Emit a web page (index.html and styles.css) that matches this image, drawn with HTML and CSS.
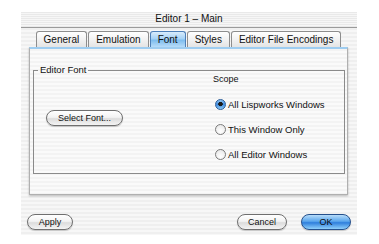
FILE: index.html
```html
<!DOCTYPE html>
<html lang="en">
<head>
    <meta charset="UTF-8">
    <title>Editor 1 – Main</title>
    <link rel="stylesheet" href="styles.css">
</head>
<body>
    <div class="window">
        <div class="titlebar">Editor 1 – Main</div>

        <div class="tabs">
            <div class="tab">General</div>
            <div class="tab">Emulation</div>
            <div class="tab active">Font</div>
            <div class="tab">Styles</div>
            <div class="tab">Editor File Encodings</div>
        </div>

        <div class="panel">
            <fieldset class="group">
                <legend>Editor Font</legend>
                <div class="group-left">
                    <button class="btn">Select Font...</button>
                </div>
                <div class="group-right">
                    <div class="scope-label">Scope</div>
                    <label class="radio checked"><span class="dot"></span>All Lispworks Windows</label>
                    <label class="radio"><span class="dot"></span>This Window Only</label>
                    <label class="radio"><span class="dot"></span>All Editor Windows</label>
                </div>
            </fieldset>
        </div>

        <div class="buttons">
            <button class="btn apply">Apply</button>
            <div class="buttons-right">
                <button class="btn cancel">Cancel</button>
                <button class="btn ok">OK</button>
            </div>
        </div>
    </div>
</body>
</html>
```

FILE: styles.css
```css
* {
    box-sizing: border-box;
}

body {
    margin: 0;
    background: white;
    font-family: "Liberation Sans", Arial, sans-serif;
    color: #111;
}

.window {
    margin: 12px 0 0 21px;
    width: 336px;
    height: 223px;
    background: repeating-linear-gradient(to bottom, #efefef 0, #efefef 2px, #f7f7f7 2px, #f7f7f7 4px);
}

.titlebar {
    height: 16px;
    line-height: 14px;
    font-size: 10px;
    text-align: center;
    border-bottom: 1px solid #9a9a9a;
    background: repeating-linear-gradient(to bottom, #e9e9e9 0, #e9e9e9 1px, #f6f6f6 1px, #f6f6f6 2px);
}

.tabs {
    display: flex;
    justify-content: center;
    gap: 1px;
    margin-top: 3px;
    height: 16px;
    padding-right: 1px;
}

.tab {
    font-size: 10px;
    line-height: 15px;
    padding: 0 7px;
    border: 1px solid #8d8d8d;
    border-bottom: none;
    border-radius: 3px 3px 0 0;
    background: linear-gradient(to bottom, #ffffff, #f2f2f2 50%, #e4e4e4);
}

.tab.active {
    border-color: #4d7fb8;
    background: linear-gradient(to bottom, #d9ecfc, #a5d2f6 45%, #7ebdee 55%, #b8dcf8);
}

.panel {
    margin: 0 9px 0 8px;
    height: 148px;
    border: 1px solid #b0b0b0;
    border-top: 2px solid #9ecdf1;
    padding: 16px 2px 0 3px;
    background: repeating-linear-gradient(to bottom, #f3f3f3 0, #f3f3f3 2px, #fafafa 2px, #fafafa 4px);
    box-shadow: 0 1px 2px rgba(0, 0, 0, 0.25);
}

.group {
    margin: 0;
    padding: 0;
    height: 109px;
    border: 1px solid #8a8a8a;
    display: flex;
    align-items: center;
}

.group legend {
    font-size: 9.5px;
    margin-left: 4px;
    padding: 0 2px;
    line-height: 10px;
}

.group-left {
    width: 181px;
    padding-left: 12px;
    margin-top: -16px;
}

.group-right {
    display: flex;
    flex-direction: column;
    margin-top: -14px;
}

.scope-label {
    font-size: 9px;
    margin-left: -2px;
    margin-bottom: 14px;
}

.radio {
    display: flex;
    align-items: center;
    gap: 2px;
    font-size: 9.5px;
    height: 12px;
    margin-bottom: 13px;
}

.radio:last-child {
    margin-bottom: 0;
}

.dot {
    width: 11px;
    height: 11px;
    border-radius: 50%;
    border: 1px solid #7a7a7a;
    background: radial-gradient(circle at 50% 70%, #ffffff, #e4e4e4);
}

.radio.checked .dot {
    border-color: #2b5d99;
    background: radial-gradient(circle at 50% 45%, #1a1a1a 0, #1a1a1a 2px, transparent 2.5px),
                linear-gradient(to bottom, #8ec3f0, #3f8be0 50%, #8ccaf6);
}

.btn {
    font-family: "Liberation Sans", Arial, sans-serif;
    font-size: 9px;
    color: #111;
    height: 16px;
    padding: 0 6px;
    border: 1px solid #6f6f6f;
    border-radius: 8px;
    background: linear-gradient(to bottom, #ffffff, #f3f3f3 45%, #dcdcdc 55%, #f4f4f4);
    box-shadow: 0 1px 1px rgba(0, 0, 0, 0.2);
}

.group-left .btn {
    width: 77px;
}

.buttons {
    display: flex;
    justify-content: space-between;
    align-items: center;
    margin-top: 19px;
    padding: 0 6px;
}

.buttons-right {
    display: flex;
    gap: 14px;
}

.apply {
    width: 46px;
}

.cancel,
.ok {
    width: 50px;
}

.ok {
    border-color: #25508c;
    background: linear-gradient(to bottom, #b7dcfa, #5aa6ec 45%, #2f7fdc 55%, #8fd0fb);
}
```
